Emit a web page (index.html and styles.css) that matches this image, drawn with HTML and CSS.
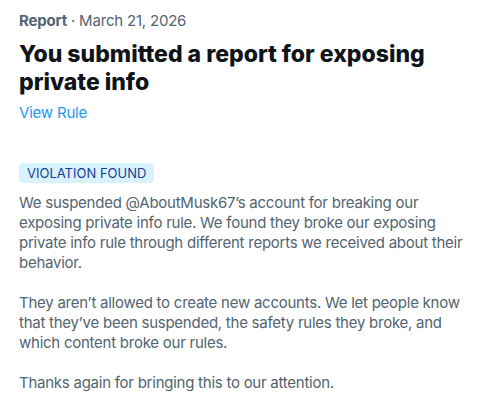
FILE: index.html
```html
<!DOCTYPE html>
<html lang="en">
    <head>
        <meta charset="UTF-8" />
        <meta name="viewport" content="width=device-width, initial-scale=1.0" />
        <title>Report</title>
        <link rel="stylesheet" href="styles.css">
    </head>

    <body>
        <!-- 举报详情 -->
        <div id="report">
            <div class="meta"><span class="kind">Report</span> · March 21, 2026</div>
            <h1>You submitted a report for exposing private info</h1>
            <a class="rule-link" href="#">View Rule</a>

            <div class="badge">VIOLATION FOUND</div>
            <p>We suspended @AboutMusk67’s account for breaking our exposing private info rule. We found they broke our exposing private info rule through different reports we received about their behavior.</p>
            <p>They aren’t allowed to create new accounts. We let people know that they’ve been suspended, the safety rules they broke, and which content broke our rules.</p>
            <p>Thanks again for bringing this to our attention.</p>
        </div>
    </body>
</html>
```

FILE: styles.css
```css
* {
    margin: 0;
    padding: 0;
    box-sizing: border-box;
}

body {
    padding: 11px 12px 0 19px;
    background: #fff;
    font-family: Inter, "Liberation Sans", sans-serif;
    color: #536471;
}

.meta {
    font-size: 15px;
    line-height: 20px;
    letter-spacing: -0.2px;
}

.kind {
    font-weight: 700;
}

h1 {
    margin-top: 9px;
    font-size: 23px;
    line-height: 28px;
    font-weight: 800;
    color: #0f1419;
}

.rule-link {
    display: inline-block;
    margin-top: 7px;
    font-size: 15px;
    line-height: 20px;
    letter-spacing: -0.2px;
    color: #1d9bf0;
    text-decoration: none;
}

.badge {
    width: fit-content;
    margin-top: 40px;
    padding: 0 8px;
    font-size: 13px;
    line-height: 20px;
    color: #1a3d8f;
    background-color: #d6f3ff;
    border-radius: 4px;
}

p {
    margin-top: 10px;
    font-size: 15px;
    line-height: 20px;
    letter-spacing: -0.25px;
}

p + p {
    margin-top: 20px;
}
```
